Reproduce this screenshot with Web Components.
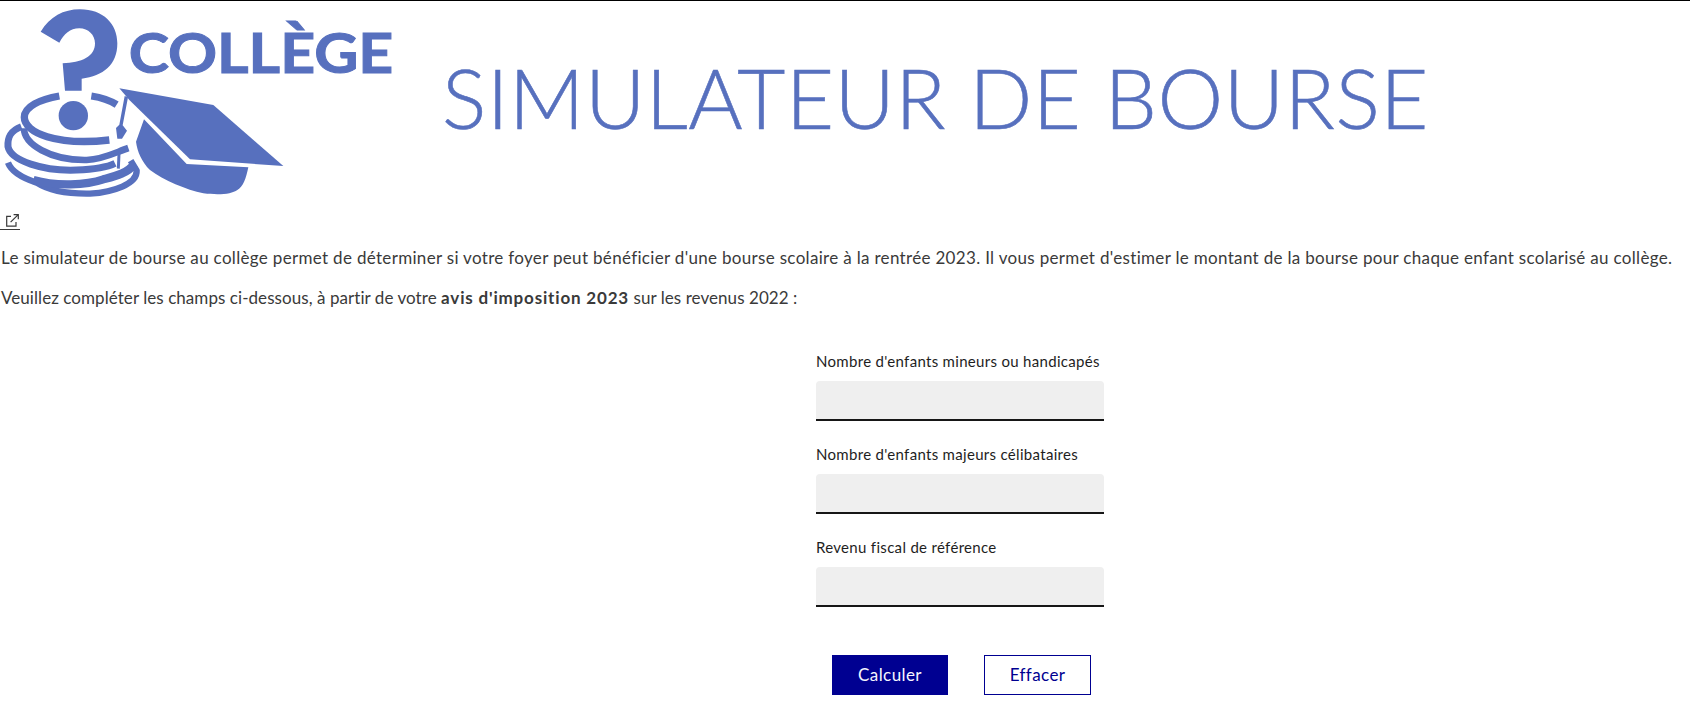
<!DOCTYPE html>
<html lang="fr">
<head>
<meta charset="utf-8">
<title>Simulateur de bourse</title>
<style>
  html, body { margin: 0; padding: 0; background: #fff; }
  body { font-family: Lato, "Noto Sans", sans-serif; color: #3a3a3a; font-size: 17px; line-height: 24px; }
</style>
</head>
<body>
<sim-page>
  <sim-header title-text="SIMULATEUR DE BOURSE"></sim-header>
  <ext-link></ext-link>
  <intro-text>Le simulateur de bourse au collège permet de déterminer si votre foyer peut bénéficier d'une bourse scolaire à la rentrée 2023. Il vous permet d'estimer le montant de la bourse pour chaque enfant scolarisé au collège.</intro-text>
  <intro-text compact>Veuillez compléter les champs ci-dessous, à partir de votre <b>avis d'imposition 2023</b> sur les revenus 2022 :</intro-text>
  <sim-form>
    <sim-field label="Nombre d'enfants mineurs ou handicapés"></sim-field>
    <sim-field label="Nombre d'enfants majeurs célibataires"></sim-field>
    <sim-field label="Revenu fiscal de référence"></sim-field>
    <sim-button slot="actions" kind="primary">Calculer</sim-button>
    <sim-button slot="actions" kind="secondary">Effacer</sim-button>
  </sim-form>
</sim-page>

<script>
class SimPage extends HTMLElement {
  constructor() {
    super();
    this.attachShadow({mode: 'open'}).innerHTML = `
      <style>
        :host { display: block; border-top: 1px solid #000; }
      </style>
      <slot></slot>
    `;
  }
}

class CollegeLogo extends HTMLElement {
  constructor() {
    super();
    this.attachShadow({mode: 'open'}).innerHTML = `
      <style>
        :host { display: block; width: 420px; height: 199px; flex: none; }
        svg { display: block; }
        text { font-family: Lato, sans-serif; font-weight: 700; fill: #5770be; stroke: #5770be; stroke-width: 3px; }
      </style>
      <svg width="420" height="199" viewBox="0 3 1260 597">
        <path fill="#5770be" d="M122 95C150 50 190 28 240 28C310 28 352 72 352 130C352 195 310 228 245 236L245 272L195 272L188 190C245 188 285 170 285 130C285 105 265 85 238 85C210 85 192 102 178 128Z"/>
        <circle fill="#5770be" cx="220" cy="347" r="44"/>
        <g fill="none" stroke="#5770be" stroke-linecap="butt" stroke-linejoin="round">
          <path stroke-width="22" d="M178 288C120 298 73 320 73 352C73 398 170 438 328 420"/>
          <path stroke-width="22" d="M274 288C300 292 328 300 350 314"/>
          <path stroke-width="20" d="M72 385C72 432 150 482 260 480C310 478 345 458 385 444"/>
          <path stroke-width="21" d="M64 380C32 392 22 410 24 440C32 482 130 514 230 510C280 508 320 502 345 490"/>
          <path stroke-width="19" d="M24 488C34 515 70 535 110 548C150 574 210 582 270 581C340 576 412 552 410 512L392 482"/>
          <path stroke-width="25" d="M100 540C170 560 260 555 310 538C340 530 385 520 402 492"/>
          <path stroke-width="9" d="M357 462L355 506"/>
        </g>
        <path fill="#5770be" d="M358 265L640 315L850 498L570 478L388 300Z"/>
        <path fill="#5770be" d="M432 358L560 492L745 502C738 535 730 560 712 570C695 582 660 586 610 580C560 570 490 540 450 510C425 485 412 455 408 425Z"/>
        <path fill="#5770be" d="M374 288L384 292L368 376L381 392L366 416L352 416L348 384L358 374Z"/>
        <text x="386" y="220" font-size="168" textLength="794" lengthAdjust="spacingAndGlyphs">COLLÈGE</text>
      </svg>
    `;
  }
}

class SimHeader extends HTMLElement {
  constructor() {
    super();
    this.attachShadow({mode: 'open'}).innerHTML = `
      <style>
        :host { display: flex; align-items: flex-start; height: 200px; }
        h1 {
          margin: 46px 0 0 22px;
          font: 300 83px/100px Lato, sans-serif;
          letter-spacing: .5px;
          -webkit-text-stroke: .6px #5770be;
          color: #5770be;
          white-space: nowrap;
        }
      </style>
      <college-logo></college-logo>
      <h1></h1>
    `;
  }
  connectedCallback() {
    this.shadowRoot.querySelector('h1').textContent = this.getAttribute('title-text');
  }
}

class ExtLink extends HTMLElement {
  constructor() {
    super();
    this.attachShadow({mode: 'open'}).innerHTML = `
      <style>
        :host { display: block; height: 45px; padding-top: 11px; box-sizing: border-box; }
        a { display: block; width: 20px; height: 17px; border-bottom: 1px solid #3a3a3a; position: relative; }
        svg { position: absolute; left: 6px; top: 2px; }
      </style>
      <a href="#" aria-label="Lien externe">
        <svg width="13" height="13" viewBox="0 0 13 13" fill="none" stroke="#3a3a3a" stroke-width="1.2">
          <path d="M5 2.4H.7V12.2H10V8"/>
          <path d="M4.6 8.2L12 .8M7.6 .6H12.3V5.3"/>
        </svg>
      </a>
    `;
  }
}

class IntroText extends HTMLElement {
  constructor() {
    super();
    this.attachShadow({mode: 'open'}).innerHTML = `
      <style>
        :host { display: block; margin-bottom: 16px; padding-left: 1px; letter-spacing: .32px; white-space: nowrap; }
        :host([compact]) { letter-spacing: .06px; }
        ::slotted(b) { letter-spacing: .82px; }
      </style>
      <slot></slot>
    `;
  }
}

class SimForm extends HTMLElement {
  constructor() {
    super();
    this.attachShadow({mode: 'open'}).innerHTML = `
      <style>
        :host { display: block; width: 288px; margin: 39px 0 0 816px; }
        .fields { display: grid; row-gap: 21px; }
        .actions { display: flex; gap: 36px; margin: 48px 0 0 16px; }
      </style>
      <div class="fields"><slot></slot></div>
      <div class="actions"><slot name="actions"></slot></div>
    `;
  }
}

class SimField extends HTMLElement {
  constructor() {
    super();
    this.attachShadow({mode: 'open'}).innerHTML = `
      <style>
        :host { display: block; }
        label { display: block; height: 24px; margin-bottom: 8px; font-size: 15px; line-height: 24px; letter-spacing: .31px; color: #1e1e1e; white-space: nowrap; }
        input {
          display: block; box-sizing: border-box; width: 100%; height: 40px;
          padding: 8px 16px; margin: 0; border: 0; border-bottom: 2px solid #161616;
          border-radius: 4px 4px 0 0; background: #efefef; font: inherit; color: #1e1e1e; outline: 0;
        }
      </style>
      <label for="f"></label>
      <input id="f" type="text">
    `;
  }
  connectedCallback() {
    this.shadowRoot.querySelector('label').textContent = this.getAttribute('label');
  }
}

class SimButton extends HTMLElement {
  constructor() {
    super();
    this.attachShadow({mode: 'open'}).innerHTML = `
      <style>
        :host { display: block; }
        button {
          display: block; box-sizing: border-box; height: 40px; padding: 0; margin: 0;
          font: 400 17px/24px Lato, sans-serif; letter-spacing: .4px; cursor: pointer;
          border: 1px solid #000091; border-radius: 0;
        }
        :host([kind=primary]) button { width: 116px; background: #000091; color: #f5f5fe; }
        :host([kind=secondary]) button { width: 107px; background: #fff; color: #000091; }
      </style>
      <button type="button"><slot></slot></button>
    `;
  }
}

customElements.define('sim-page', SimPage);
customElements.define('college-logo', CollegeLogo);
customElements.define('sim-header', SimHeader);
customElements.define('ext-link', ExtLink);
customElements.define('intro-text', IntroText);
customElements.define('sim-form', SimForm);
customElements.define('sim-field', SimField);
customElements.define('sim-button', SimButton);
</script>
</body>
</html>
